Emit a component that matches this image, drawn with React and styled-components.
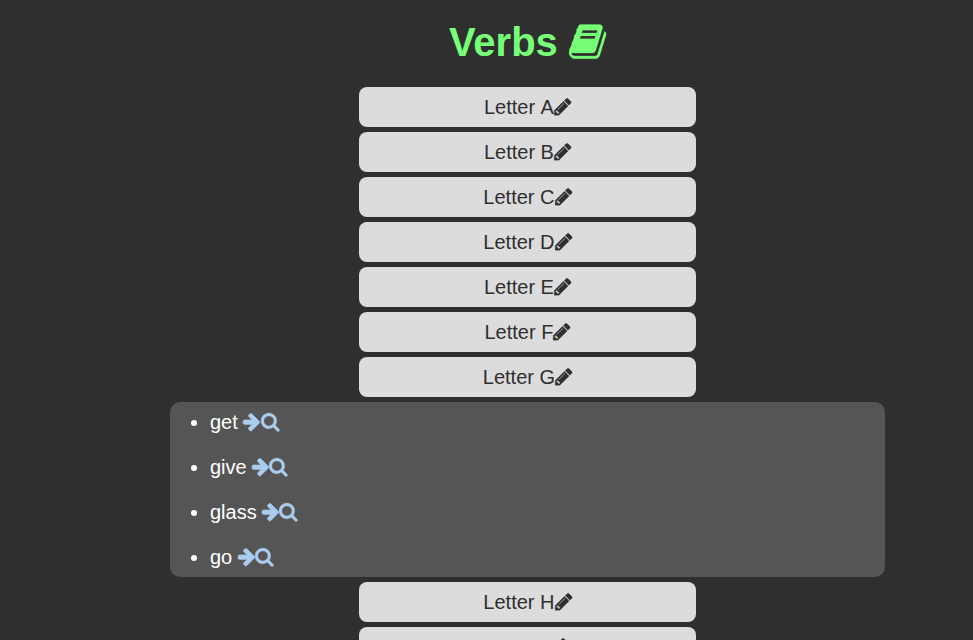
import React from "react";
import styled, { createGlobalStyle } from "styled-components";

const Global = createGlobalStyle`
  html { overflow: hidden; }
  body {
    margin: 0;
    height: 640px;
    overflow: hidden;
    background: #2f2f2f;
    font-family: "Liberation Sans", Arial, sans-serif;
    font-size: 20px;
  }
`;

const Main = styled.main`
  width: 715px;
  margin-left: 170px;
  display: flex;
  flex-direction: column;
  align-items: center;
  gap: 5px;
`;

const Title = styled.h1`
  margin: 0 0 17px;
  padding-top: 20px;
  font-size: 40px;
  line-height: 45px;
  color: #77ff77;
`;

const LetterButton = styled.button`
  width: 337px;
  height: 40px;
  padding: 0;
  border: 0;
  border-radius: 8px;
  background: #dcdcdc;
  color: #2f2f2f;
  font: inherit;
  line-height: 40px;
`;

const WordList = styled.ul`
  box-sizing: border-box;
  width: 100%;
  margin: 0;
  padding: 0 0 0 40px;
  display: grid;
  gap: 5px;
  border-radius: 10px;
  background: #555555;
  color: #ffffff;
`;

const Word = styled.li`
  line-height: 40px;
`;

const WordLink = styled.a`
  color: #aaccee;
`;

const Glyph = styled.svg`
  height: 1em;
  width: auto;
  overflow: visible;
  vertical-align: -0.142857em;
  fill: currentColor;
  stroke: currentColor;
  stroke-width: ${(p) => p.$weight};
  stroke-linejoin: round;
`;

const icons = {
  book: {
    box: "64 18 1664 1792",
    weight: 10,
    d: "M1703 478q40 57 18 129l-275 906q-19 64-76.5 107.5t-122.5 43.5h-923q-77 0-148.5-53.5t-99.5-131.5q-24-67-2-127 0-4 3-27t4-37q1-8-3-21.5t-3-19.5q2-11 8-21t16.5-23.5 16.5-23.5q23-38 45-91.5t30-91.5q3-10 .5-30t-.5-28q3-11 17-28t17-23q21-36 42-92t25-90q1-9-2.5-32t.5-28q4-13 22-30.5t22-22.5q19-26 42.5-84.5t27.5-96.5q1-8-3-25.5t-2-26.5q2-8 9-18t18-23 17-21q8-12 16.5-30.5t15-35 16-36 19.5-32 26.5-23.5 36-11.5 47.5 5.5l-1 3q38-9 51-9h761q74 0 114 56t18 130l-274 906q-36 119-71.5 153.5t-128.5 34.5h-869q-27 0-38 15-11 16-1 43 24 70 144 70h923q29 0 56-15.5t35-41.5l300-987q7-22 5-57 38 15 59 43zm-1064 2q-4 13 2 22.5t20 9.5h608q13 0 25.5-9.5t16.5-22.5l21-64q4-13-2-22.5t-20-9.5h-608q-13 0-25.5 9.5t-16.5 22.5zm-83 256q-4 13 2 22.5t20 9.5h608q13 0 25.5-9.5t16.5-22.5l21-64q4-13-2-22.5t-20-9.5h-608q-13 0-25.5 9.5t-16.5 22.5z",
  },
  pencil: {
    box: "108 30 1536 1792",
    weight: 24,
    d: "M491 1536l91-91-235-235-91 91v107h128v128h107zm523-928q0-22-22-22-10 0-17 7l-542 542q-7 7-7 17 0 22 22 22 10 0 17-7l542-542q7-7 7-17zm-54-192l416 416-832 832h-416v-416zm683 96q0 53-37 90l-166 166-416-416 166-165q36-38 90-38 53 0 91 38l235 234q37 39 37 91z",
  },
  arrow: {
    box: "118 45 1536 1792",
    weight: 70,
    d: "M1600 960q0 54-37 91l-651 651q-39 37-91 37-51 0-90-37l-75-75q-38-38-38-91t38-91l293-293h-704q-52 0-84.5-37.5t-32.5-90.5v-128q0-53 32.5-90.5t84.5-37.5h704l-293-294q-38-36-38-90t38-90l75-75q38-38 90-38 53 0 91 38l651 651q37 35 37 90z",
  },
  search: {
    box: "64 35 1664 1792",
    weight: 30,
    d: "M1216 832q0-185-131.5-316.5t-316.5-131.5-316.5 131.5-131.5 316.5 131.5 316.5 316.5 131.5 316.5-131.5 131.5-316.5zm512 832q0 52-38 90t-90 38q-54 0-90-38l-343-342q-179 124-399 124-143 0-273.5-55.5t-225-150-150-225-55.5-273.5 55.5-273.5 150-225 225-150 273.5-55.5 273.5 55.5 225 150 150 225 55.5 273.5q0 220-124 399l343 343q37 37 37 90z",
  },
};

function Icon({ name }) {
  return (
    <Glyph viewBox={icons[name].box} $weight={icons[name].weight} aria-hidden="true">
      <path d={icons[name].d} />
    </Glyph>
  );
}

const letters = ["A", "B", "C", "D", "E", "F", "G", "H", "I"];
const words = { G: ["get", "give", "glass", "go"] };

export default function App() {
  return (
    <>
      <Global />
      <Main>
        <Title>
          Verbs <Icon name="book" />
        </Title>
        {letters.map((letter) => (
          <React.Fragment key={letter}>
            <LetterButton>
              Letter&nbsp;{letter}
              <Icon name="pencil" />
            </LetterButton>
            {words[letter] && (
              <WordList>
                {words[letter].map((word) => (
                  <Word key={word}>
                    {word}{" "}
                    <WordLink>
                      <Icon name="arrow" />
                      <Icon name="search" />
                    </WordLink>
                  </Word>
                ))}
              </WordList>
            )}
          </React.Fragment>
        ))}
      </Main>
    </>
  );
}
